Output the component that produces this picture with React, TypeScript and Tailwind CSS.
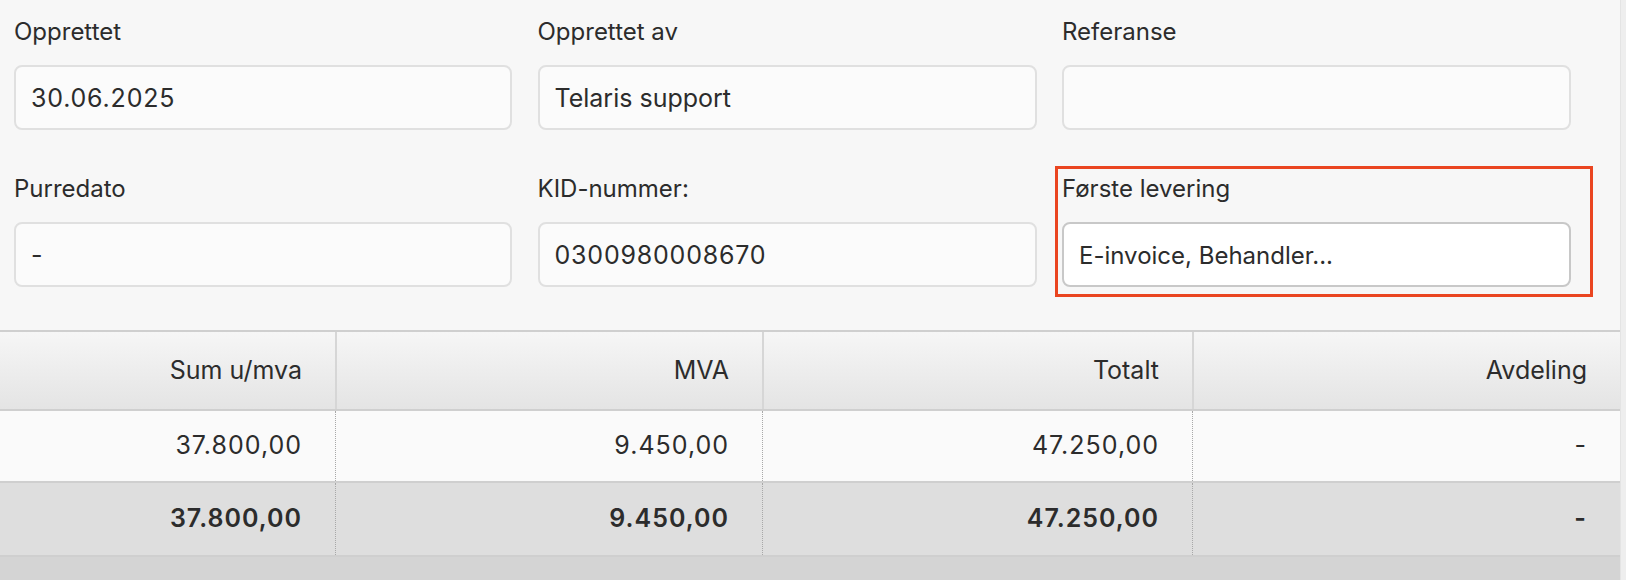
const fields = [
  { label: 'Opprettet', value: '30.06.2025', numeric: true },
  { label: 'Opprettet av', value: 'Telaris support' },
  { label: 'Referanse', value: '' },
  { label: 'Purredato', value: '-' },
  { label: 'KID-nummer:', value: '0300980008670', numeric: true },
  { label: 'Første levering', value: 'E-invoice, Behandler...', highlight: true },
];

const widths = ['w-[335px]', 'w-[427px]', 'w-[430px]', 'flex-1'];
const headers = ['Sum u/mva', 'MVA', 'Totalt', 'Avdeling'];
const rowValues = ['37.800,00', '9.450,00', '47.250,00', '-'];

function Field({
  label,
  value,
  highlight,
  numeric,
}: {
  label: string;
  value: string;
  highlight?: boolean;
  numeric?: boolean;
}) {
  return (
    <div className="relative">
      {highlight && (
        <div className="pointer-events-none absolute -left-[7px] -top-[7px] h-[131px] w-[538px] border-[3px] border-[#ea4520]" />
      )}
      <label className="mb-[17px] block text-[24px] leading-[32px] text-[#2c2c2c]">{label}</label>
      <div
        className={
          highlight
            ? 'flex h-[65px] items-center rounded-[8px] border-2 border-[#c8c8c8] bg-white px-[15px] pt-[3px] text-[24px] text-[#2c2c2c]'
            : `flex h-[65px] items-center rounded-[8px] border-2 border-[#e0e0e0] bg-[#fbfbfb] px-[15px] pt-[3px] text-[25px] text-[#2c2c2c] ${numeric ? 'tracking-[0.8px]' : ''}`
        }
      >
        {value}
      </div>
    </div>
  );
}

function BodyRow({ bold }: { bold?: boolean }) {
  return (
    <div
      className={
        bold
          ? 'flex h-[74px] border-b-2 border-[#cfcfcf] bg-[#dedede] text-[25px] font-semibold text-[#2c2c2c]'
          : 'flex h-[72px] border-b-2 border-[#cfcfcf] bg-[#fafafa] text-[25px] text-[#2c2c2c]'
      }
    >
      {rowValues.map((v, i) => (
        <div
          key={i}
          className={`${widths[i]} flex items-center justify-end pr-[33px] tracking-[1px] ${i > 0 ? 'border-l border-dotted border-[#a8a8a8]' : ''}`}
        >
          {v}
        </div>
      ))}
    </div>
  );
}

export default function App() {
  return (
    <div className="flex h-[580px] w-[1626px] overflow-hidden font-['Inter',sans-serif]">
      <div className="flex flex-1 flex-col bg-[#f7f7f7]">
        <div className="grid grid-cols-[498px_499px_509px] gap-x-[25.5px] gap-y-[43px] px-[14px] pt-[16px] pb-[43px]">
          {fields.map((f) => (
            <Field key={f.label} {...f} />
          ))}
        </div>

        <div className="flex h-[81px] border-y-2 border-[#cfcfcf] bg-gradient-to-b from-[#f6f6f6] to-[#e4e4e4] text-[25px] text-[#2c2c2c]">
          {headers.map((h, i) => (
            <div
              key={h}
              className={`${widths[i]} flex items-center justify-end pr-[33px] ${i > 0 ? 'border-l-2 border-[#d6d6d6]' : ''}`}
            >
              {h}
            </div>
          ))}
        </div>

        <BodyRow />
        <BodyRow bold />

        <div className="flex-1 bg-[#d4d4d4]" />
      </div>
      <div className="w-[6px] border-l border-[#e4e4e4] bg-[#eeeeee]" />
    </div>
  );
}
